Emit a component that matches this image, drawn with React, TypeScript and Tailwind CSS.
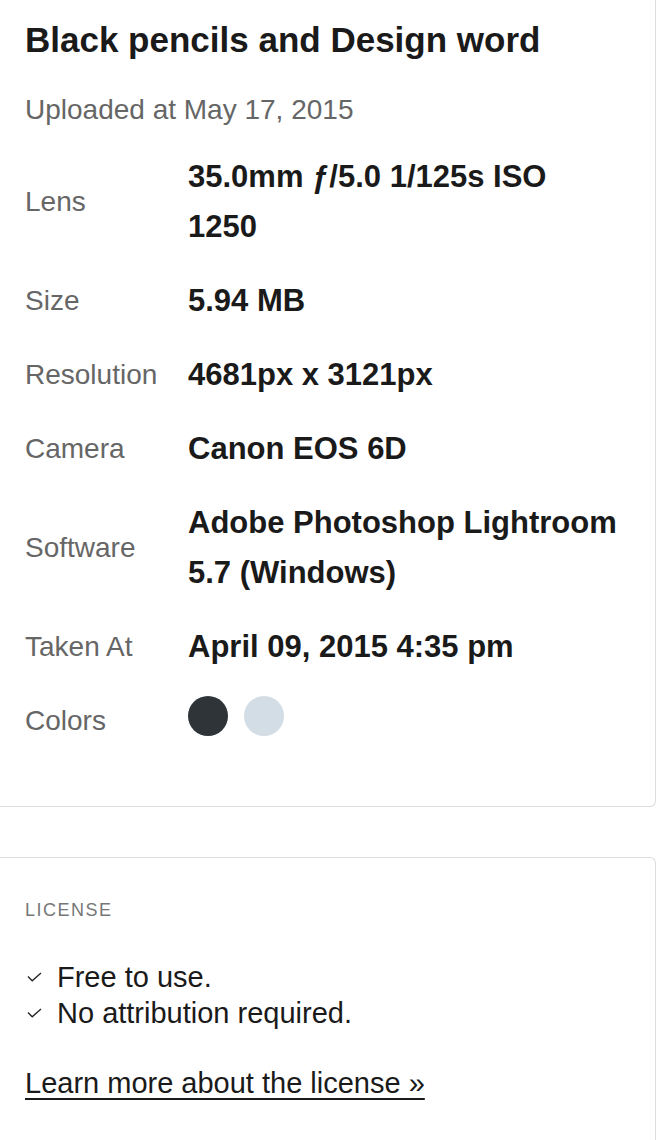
import React from "react";

const rows: { label: string; value: string }[] = [
  { label: "Lens", value: "35.0mm ƒ/5.0 1/125s ISO 1250" },
  { label: "Size", value: "5.94 MB" },
  { label: "Resolution", value: "4681px x 3121px" },
  { label: "Camera", value: "Canon EOS 6D" },
  { label: "Software", value: "Adobe Photoshop Lightroom 5.7 (Windows)" },
  { label: "Taken At", value: "April 09, 2015 4:35 pm" },
];

const Check = () => (
  <svg width="15" height="10" viewBox="0 0 15 10" className="ml-[2px] mr-[15px] shrink-0">
    <path d="M1 4.5 L5.2 8.8 L14 1" fill="none" stroke="#222" strokeWidth="1.3" />
  </svg>
);

export default function App() {
  return (
    <div
      className="w-[666px] min-h-[1140px] bg-white text-[#1a1a1a] overflow-hidden"
      style={{ fontFamily: "'Liberation Sans', Arial, sans-serif" }}
    >
      {/* photo details */}
      <div className="w-[656px] border-b border-r border-[#dddddd] rounded-br-md pl-[25px] pr-[25px] pt-[18px] pb-[60px]">
        <h1 className="text-[35px] leading-[44px] font-bold">
          Black pencils and Design word
        </h1>
        <div className="mt-[28px] text-[28px] leading-[40px] text-[#666666]">
          Uploaded at May 17, 2015
        </div>
        <div className="mt-[22px] grid grid-cols-[163px_432px] gap-y-[24px]">
          {rows.map((r) => (
            <React.Fragment key={r.label}>
              <div className="self-center text-[28px] leading-[50px] text-[#666666]">
                {r.label}
              </div>
              <div className="text-[31px] leading-[50px] font-bold">{r.value}</div>
            </React.Fragment>
          ))}
          <div className="self-center text-[28px] leading-[50px] text-[#666666]">
            Colors
          </div>
          <div className="flex gap-[16px] items-start">
            <div className="w-[40px] h-[40px] rounded-full bg-[#2f3439]" />
            <div className="w-[40px] h-[40px] rounded-full bg-[#d3dde6]" />
          </div>
        </div>
      </div>

      {/* license */}
      <div className="mt-[50px] w-[656px] h-[300px] border-t border-r border-[#dddddd] rounded-tr-md pl-[25px] pt-[40px]">
        <div className="text-[18px] leading-[24px] tracking-[1.5px] text-[#777777]">
          LICENSE
        </div>
        <ul className="mt-[37px] text-[29px] leading-[36px]">
          <li className="flex items-center">
            <Check />
            Free to use.
          </li>
          <li className="flex items-center">
            <Check />
            No attribution required.
          </li>
        </ul>
        <a href="#" className="mt-[34px] block text-[29px] leading-[36px] underline underline-offset-[5px] decoration-[2px]">
          Learn more about the license »
        </a>
      </div>
    </div>
  );
}
